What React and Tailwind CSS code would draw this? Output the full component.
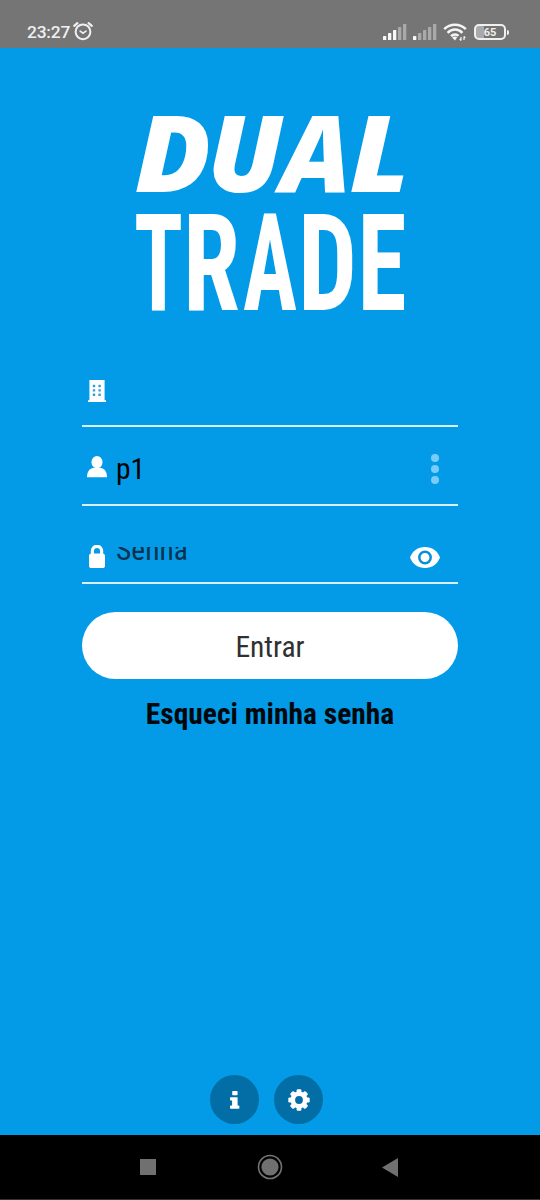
import { useState } from 'react';

const DUAL_LETTERS = [
  { char: 'D', x: 14.5, width: 77 },
  { char: 'U', x: 87, width: 76 },
  { char: 'A', x: 160.5, width: 71 },
  { char: 'L', x: 229.5, width: 60 },
];

const TRADE_LETTERS = [
  { char: 'T', x: 14, width: 49 },
  { char: 'R', x: 63, width: 57 },
  { char: 'A', x: 123, width: 54 },
  { char: 'D', x: 178, width: 59 },
  { char: 'E', x: 237.5, width: 49 },
];

// Each letter of the wordmark keeps its own width and position
function LogoWord({ letters, y, className }) {
  return (
    <text className={className} y={y}>
      {letters.map(({ char, x, width }) => (
        <tspan key={char} x={x} textLength={width} lengthAdjust="spacingAndGlyphs">{char}</tspan>
      ))}
    </text>
  );
}

function Logo() {
  return (
    <svg className="h-[210px] w-[300px] overflow-visible" viewBox="0 0 300 210" fill="white" aria-label="Dual Trade">
      <LogoWord
        letters={DUAL_LETTERS}
        y="81.5"
        className="font-['Open_Sans',sans-serif] text-[105.5px] font-extrabold italic font-stretch-normal"
      />
      <LogoWord
        letters={TRADE_LETTERS}
        y="199.5"
        className="font-['Roboto_Condensed',Roboto,sans-serif] text-[135px] font-bold font-stretch-condensed"
      />
    </svg>
  );
}

function AlarmIcon() {
  return (
    <svg className="h-5 w-5" viewBox="0 0 20 20" fill="none" stroke="#f0f0f0" strokeWidth="2" strokeLinecap="round">
      <circle cx="10" cy="10.8" r="7.4" />
      <path d="M1.2 4.8 4.4 2.1M18.8 4.8 15.6 2.1" strokeWidth="2.2" />
      <path d="m7.2 10.1 2.8 2 3-2" strokeWidth="1.7" />
    </svg>
  );
}

function SignalBars({ active }) {
  return (
    <svg className="h-4 w-6" viewBox="0 0 24 16" fill="white">
      {[4, 7, 10, 13, 16].map((height, i) => (
        <rect key={height} x={i * 5} y={16 - height} width="3.3" height={height} rx="0.6" opacity={i < active ? 0.95 : 0.38} />
      ))}
    </svg>
  );
}

function WifiIcon() {
  return (
    <svg className="h-[18px] w-6" viewBox="0 0 24 18" fill="none" stroke="#f5f5f5" strokeWidth="2.5">
      <path d="M1.2 6.2C7 .2 17 .2 22.8 6.2M4.6 9.8C8.8 5.5 15.2 5.5 19.4 9.8M8 13.2C10.3 10.9 13.7 10.9 15.4 12.8" />
      <path d="m12 17.6-3-3c1.8-1.5 4.2-1.5 5.2-.4z" fill="#f5f5f5" stroke="none" />
      <path d="M18 14v3.5M21 13.5V17M16.7 16l1.3 1.5M21 13.5l1.3 1.3" strokeWidth="1.2" />
    </svg>
  );
}

function StatusBar() {
  return (
    <header className="flex h-12 items-start justify-between bg-[#757575] pl-[27px] pr-[31px] pt-[22px] font-[Roboto,sans-serif] text-[#f0f0f0] font-stretch-normal">
      <div className="flex items-center gap-[3px]">
        <span className="w-[43px] text-[17.4px] leading-5 font-medium tracking-[-0.2px]">23:27</span>
        <div className="-mt-0.5"><AlarmIcon /></div>
      </div>
      <div className="flex items-center pt-px">
        <SignalBars active={3} />
        <div className="ml-1.5"><SignalBars active={1} /></div>
        <div className="ml-1.5"><WifiIcon /></div>
        <div className="ml-[7px] flex h-4 w-8 items-center rounded-[5px] border-2 border-[#f0f0f0] bg-[linear-gradient(90deg,#aaa_0_28%,transparent_28%)]">
          <span className="w-full text-center text-[11px] leading-none font-bold">65</span>
        </div>
        <div className="ml-px h-[5px] w-[2px] rounded-r bg-[#f0f0f0]" />
      </div>
    </header>
  );
}

function BuildingIcon() {
  return (
    <svg className="h-[22px] w-[18px]" viewBox="0 0 18 22" fill="white">
      <path d="M1.4 0h15.2v20.2H18V22H0v-1.8h1.4z" />
      <g fill="#2a9fdc">
        {[4.8, 9.2, 13.6].map((y) => (
          <g key={y}>
            <rect x="4.8" y={y} width="2.4" height="2.4" rx="0.6" />
            <rect x="10.4" y={y} width="2.4" height="2.4" rx="0.6" />
          </g>
        ))}
      </g>
    </svg>
  );
}

function UserIcon() {
  return (
    <svg className="h-[22px] w-5" viewBox="0 0 20 22" fill="white">
      <ellipse cx="10" cy="6.2" rx="5.5" ry="6.2" />
      <path d="M0 21.3c0-5.6 2-8.4 6.5-9.6h7c4.5 1.2 6.5 4 6.5 9.6z" />
    </svg>
  );
}

function LockIcon() {
  return (
    <svg className="h-[23px] w-4" viewBox="0 0 16 23">
      <path d="M3.4 10V5.8a4.6 4.5 0 0 1 9.2 0V10" fill="none" stroke="white" strokeWidth="3.2" />
      <rect y="8.6" width="16" height="14.4" rx="2.6" fill="white" />
    </svg>
  );
}

function EyeIcon() {
  return (
    <svg className="h-[21px] w-[30px]" viewBox="0 0 30 21">
      <path d="M0 10.5C2.5 4 8 0 15 0s12.5 4 15 10.5C27.5 17 22 21 15 21S2.5 17 0 10.5z" fill="white" />
      <circle cx="15" cy="10.5" r="5.7" fill="none" stroke="#0590d8" strokeWidth="2.5" />
    </svg>
  );
}

function InfoIcon() {
  return (
    <svg className="h-[18px] w-2.5" viewBox="0 0 10 18" fill="white">
      <rect x="2.2" width="5.4" height="4.3" rx="0.8" />
      <path d="M.8 6.2h6.8v8.2h1q.8 0 .8.8V17q0 .8-.8.8H.8Q0 17.8 0 17v-1.8q0-.8.8-.8h1.3V9.5H.8Q0 9.500 0 8.7V7q0-.8.8-.8z" />
    </svg>
  );
}

function GearIcon() {
  return (
    <svg className="h-[22px] w-[22px]" viewBox="0 0 22 22" fill="white">
      {[0, 45, 90, 135].map((angle) => (
        <rect key={angle} x="8.6" y="0.3" width="4.8" height="21.4" rx="1.2" transform={`rotate(${angle} 11 11)`} />
      ))}
      <circle cx="11" cy="11" r="8.5" />
      <circle cx="11" cy="11" r="3.9" fill="#036ea5" />
    </svg>
  );
}

function NavigationBar() {
  return (
    <nav className="flex h-[65px] items-center justify-between border-b border-[#333] bg-black pl-[140px] pr-[142px]">
      <div className="h-4 w-4 bg-[#707070]" />
      <svg className="ml-0.5 h-[26px] w-[26px]" viewBox="0 0 26 26">
        <circle cx="13" cy="13" r="11.5" fill="none" stroke="#747474" strokeWidth="1.6" />
        <circle cx="13" cy="13" r="8.6" fill="#707070" />
      </svg>
      <svg className="h-[19px] w-4" viewBox="0 0 16 19" fill="#707070">
        <path d="M16 0v19L0 9.5z" />
      </svg>
    </nav>
  );
}

export default function App() {
  const [user, setUser] = useState('p1');

  return (
    <div className="flex h-[1200px] w-[540px] flex-col overflow-hidden bg-[#039be8] font-['Roboto_Condensed',Roboto,sans-serif] font-stretch-condensed">
      <StatusBar />

      <main className="flex flex-1 flex-col items-center">
        <div className="mt-[62px]"><Logo /></div>

        <form className="flex w-[376px] flex-col" onSubmit={(e) => e.preventDefault()}>
          <div className="flex h-[107px] items-start border-b-2 border-white/85 pl-1.5 pt-[60px]">
            <BuildingIcon />
          </div>
          <div className="flex h-[79px] items-start border-b-2 border-white/85 pl-[5px] pr-[19px] pt-[29px]">
            <UserIcon />
            <input
              className="-mt-[3px] ml-[9px] h-8 w-64 bg-transparent text-[29.5px] leading-8 text-black outline-none"
              value={user}
              onChange={(e) => setUser(e.target.value)}
            />
            <div className="-mt-[2px] ml-auto flex flex-col gap-[3px]">
              <span className="h-2 w-2 rounded-full bg-[#78cdf8]" />
              <span className="h-2 w-2 rounded-full bg-[#78cdf8]" />
              <span className="h-2 w-2 rounded-full bg-[#78cdf8]" />
            </div>
          </div>
          <div className="flex h-[78px] items-start border-b-2 border-white/85 pl-[7px] pr-[18px] pt-[39px]">
            <LockIcon />
            <div className="ml-[11px] mt-[2px] h-5 overflow-hidden">
              <span className="-mt-[15px] block text-[29.5px] leading-9 text-[#09324d]">Senha</span>
            </div>
            <button type="button" className="ml-auto mt-[2px]" aria-label="Mostrar senha"><EyeIcon /></button>
          </div>
          <button className="mt-7 h-[67px] rounded-full bg-white pt-[3px] text-[29.5px] text-[#303030]">Entrar</button>
        </form>

        <a href="#" className="mt-[17px] text-[29.5px] leading-9 font-bold text-[#02070b]">Esqueci minha senha</a>

        <div className="mt-auto mb-[11px] flex gap-[15px] pr-[7px]">
          <button className="flex h-[49px] w-[49px] items-center justify-center rounded-full bg-[#036ea5]" aria-label="Informações"><InfoIcon /></button>
          <button className="flex h-[49px] w-[49px] items-center justify-center rounded-full bg-[#036ea5]" aria-label="Configurações"><GearIcon /></button>
        </div>
      </main>

      <NavigationBar />
    </div>
  );
}
